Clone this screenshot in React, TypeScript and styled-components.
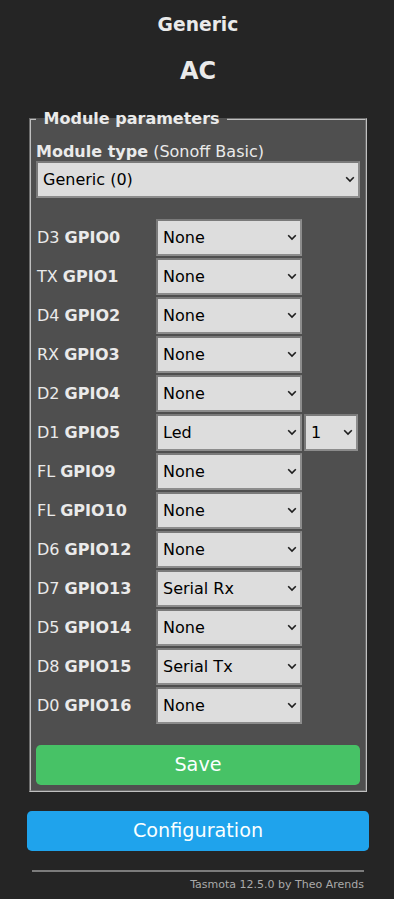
import React from "react";
import styled, { createGlobalStyle } from "styled-components";

const GlobalStyle = createGlobalStyle`
  html, body {
    margin: 0;
    padding: 0;
    background: #252525;
  }
  body {
    font-family: "DejaVu Sans", Verdana, sans-serif;
    font-size: 16px;
    color: #eaeaea;
  }
`;

const Page = styled.div`
  width: 342px;
  margin: 0 0 0 27px;
  padding-top: 14px;
  text-align: left;
`;

const Header = styled.div`
  text-align: center;
`;

const Title = styled.h3`
  margin: 0;
  font-size: 18.72px;
  font-weight: bold;
  line-height: 22px;
`;

const Device = styled.h2`
  margin: 21px 0 0;
  font-size: 24px;
  font-weight: bold;
  line-height: 28px;
`;

const Fieldset = styled.fieldset`
  margin: 25px 2px 0;
  padding: 5px 5px 5px;
  background: #4f4f4f;
  border: 2px groove #c0c0c0;
  min-width: 0;
`;

const Legend = styled.legend`
  padding: 0 2px;
  font-weight: bold;
  line-height: 18.6px;
`;

const FieldLabel = styled.div`
  margin-top: 8px;
  line-height: 19px;
`;

const SelectWrap = styled.div<{ $w?: number }>`
  position: relative;
  width: ${(p) => (p.$w ? `${p.$w}px` : "100%")};
  height: 37px;
`;

const NativeSelect = styled.select`
  display: block;
  box-sizing: border-box;
  width: 100%;
  height: 37px;
  margin: 0;
  padding: 0 24px 0 5px;
  appearance: none;
  -webkit-appearance: none;
  font-family: "DejaVu Sans", Verdana, sans-serif;
  font-size: 16px;
  color: #000;
  background: #dddddd;
  border: 2px solid;
  border-color: #7a7a7a #8c8c8c #8c8c8c #7a7a7a;
  border-radius: 0;
`;

const Chevron = styled.svg`
  position: absolute;
  right: 5px;
  top: 50%;
  margin-top: -3px;
  width: 10px;
  height: 7px;
  pointer-events: none;
`;

const ModuleBlock = styled.div`
  margin-bottom: 19px;
`;

const Grid = styled.div`
  display: grid;
  grid-template-columns: 117px 146px 54px;
  grid-auto-rows: 37px;
  gap: 2px;
  padding: 2px 2px 2px 1px;
`;

const PinLabel = styled.div`
  display: flex;
  align-items: center;
  white-space: pre;
  grid-column: 1;
`;

const Cell = styled.div<{ $col: number }>`
  grid-column: ${(p) => p.$col};
`;

const Button = styled.button<{ $bg: string }>`
  display: block;
  width: 100%;
  border: 0;
  border-radius: 0.3rem;
  background: ${(p) => p.$bg};
  color: #faffff;
  line-height: 2.4rem;
  font-size: 1.2rem;
  font-family: "DejaVu Sans", Verdana, sans-serif;
  padding: 1px 6px;
  cursor: pointer;
`;

const SaveButton = styled(Button)`
  margin-top: 19px;
`;

const ConfigButton = styled(Button)`
  margin-top: 19px;
`;

const Footer = styled.div`
  padding: 0 5px;
  margin-top: 19px;
  text-align: right;
  font-size: 11px;
`;

const Rule = styled.hr`
  margin: 0 0 6px;
  border: 0;
  border-top: 2px solid #7c7c7c;
  height: 0;
`;

const FooterLink = styled.a`
  color: #aaa;
  text-decoration: none;
  line-height: 13px;
`;

function Select({ value, width }: { value: string; width?: number }) {
  return (
    <SelectWrap $w={width}>
      <NativeSelect defaultValue={value}>
        <option>{value}</option>
      </NativeSelect>
      <Chevron viewBox="0 0 10 7">
        <path d="M1.2 1.2 L5 5 L8.8 1.2" fill="none" stroke="#1e1e1e" strokeWidth="1.6" />
      </Chevron>
    </SelectWrap>
  );
}

type Pin = { d: string; g: string; v: string; extra?: string };

const pins: Pin[] = [
  { d: "D3", g: "GPIO0", v: "None" },
  { d: "TX", g: "GPIO1", v: "None" },
  { d: "D4", g: "GPIO2", v: "None" },
  { d: "RX", g: "GPIO3", v: "None" },
  { d: "D2", g: "GPIO4", v: "None" },
  { d: "D1", g: "GPIO5", v: "Led", extra: "1" },
  { d: "FL", g: "GPIO9", v: "None" },
  { d: "FL", g: "GPIO10", v: "None" },
  { d: "D6", g: "GPIO12", v: "None" },
  { d: "D7", g: "GPIO13", v: "Serial Rx" },
  { d: "D5", g: "GPIO14", v: "None" },
  { d: "D8", g: "GPIO15", v: "Serial Tx" },
  { d: "D0", g: "GPIO16", v: "None" },
];

export default function App() {
  return (
    <>
      <GlobalStyle />
      <Page>
        <Header>
          <Title>Generic</Title>
          <Device>AC</Device>
        </Header>
        <Fieldset>
          <Legend>{"\u00a0Module parameters\u00a0"}</Legend>
          <FieldLabel>
            <b>Module type</b> (Sonoff Basic)
          </FieldLabel>
          <ModuleBlock>
            <Select value="Generic (0)" />
          </ModuleBlock>
          <Grid>
            {pins.map((p) => (
              <React.Fragment key={p.g}>
                <PinLabel>
                  {p.d + " "}
                  <b>{p.g}</b>
                </PinLabel>
                <Cell $col={2}>
                  <Select value={p.v} />
                </Cell>
                {p.extra && (
                  <Cell $col={3}>
                    <Select value={p.extra} />
                  </Cell>
                )}
              </React.Fragment>
            ))}
          </Grid>
          <SaveButton $bg="#47c266">Save</SaveButton>
        </Fieldset>
        <ConfigButton $bg="#1fa3ec">Configuration</ConfigButton>
        <Footer>
          <Rule />
          <FooterLink href="#">Tasmota 12.5.0 by Theo Arends</FooterLink>
        </Footer>
      </Page>
    </>
  );
}
